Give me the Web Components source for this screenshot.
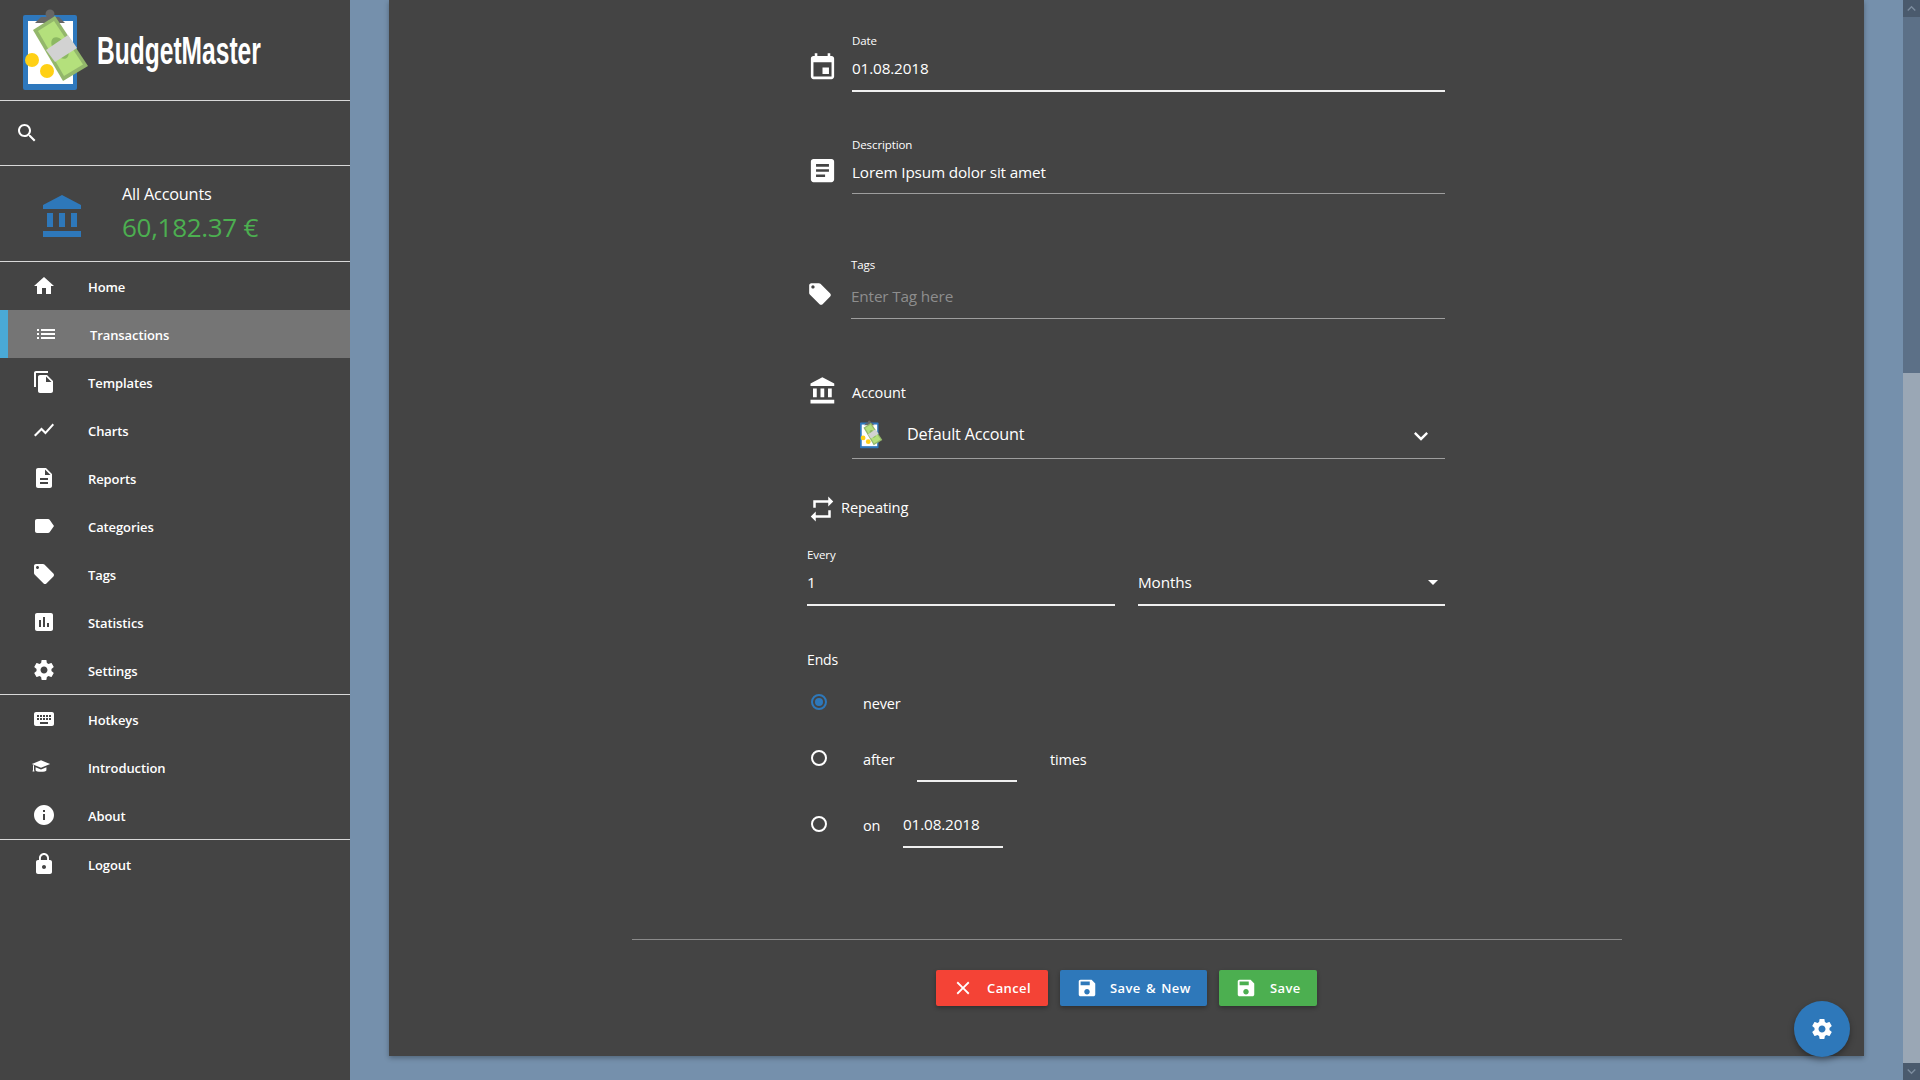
<!DOCTYPE html>
<html lang="en"><head><meta charset="utf-8"><title>BudgetMaster</title>
<style>
html,body{margin:0;padding:0;height:100%;overflow:hidden;background:#7590ac}
body{font-family:"Open Sans","Noto Sans","Liberation Sans",sans-serif;color:#fff}
</style></head><body>
<bm-app>
  <bm-sidebar slot="side">
    <bm-nav icon="home">Home</bm-nav>
    <bm-nav icon="list" active>Transactions</bm-nav>
    <bm-nav icon="copy">Templates</bm-nav>
    <bm-nav icon="chart">Charts</bm-nav>
    <bm-nav icon="doc">Reports</bm-nav>
    <bm-nav icon="label">Categories</bm-nav>
    <bm-nav icon="tag">Tags</bm-nav>
    <bm-nav icon="stats">Statistics</bm-nav>
    <bm-nav icon="gear">Settings</bm-nav>
    <bm-rule></bm-rule>
    <bm-nav icon="keyboard">Hotkeys</bm-nav>
    <bm-nav icon="cap">Introduction</bm-nav>
    <bm-nav icon="info">About</bm-nav>
    <bm-rule></bm-rule>
    <bm-nav icon="lock">Logout</bm-nav>
  </bm-sidebar>
  <bm-card slot="main">
    <bm-form>
      <bm-field icon="event" label="Date" line="strong" style="--pt:0px;--lh:38px;--pb:3px;--it:19px;--is:31px;margin-top:33px">01.08.2018</bm-field>
      <bm-field icon="article" label="Description" style="--pt:0px;--lh:38px;--pb:2px;--it:18px;--is:31px;margin-top:45px">Lorem Ipsum dolor sit amet</bm-field>
      <bm-field icon="tag" label="Tags" placeholder style="--pt:2px;--lh:42px;--pb:1px;--it:24px;--is:26px;--col:44px;margin-top:63px">Enter Tag here</bm-field>
      <bm-account style="margin-top:57px">Default Account</bm-account>
      <bm-heading style="margin-top:35px">Repeating</bm-heading>
      <bm-repeat style="margin-top:23px"></bm-repeat>
      <bm-ends style="margin-top:44px"></bm-ends>
    </bm-form>
    <bm-rule style="margin:91px 242px 0 243px;background:#8a8a8a"></bm-rule>
    <bm-actions style="margin-top:30px">
      <bm-button icon="close" color="#f44336" style="width:112px;--gap:13px">Cancel</bm-button>
      <bm-button icon="save" color="#2e78ba" style="width:147px;--gap:12px">Save &amp; New</bm-button>
      <bm-button icon="save" color="#4caf50" style="width:98px;--gap:13px">Save</bm-button>
    </bm-actions>
  </bm-card>
  <bm-scrollbar slot="bar"></bm-scrollbar>
  <bm-fab slot="fab"></bm-fab>
</bm-app>
<script>
const P={
home:'M10 20v-6h4v6h5v-8h3L12 3 2 12h3v8z',
list:'M3 13h2v-2H3v2zm0 4h2v-2H3v2zm0-8h2V7H3v2zm4 4h14v-2H7v2zm0 4h14v-2H7v2zM7 7v2h14V7H7z',
copy:'M16 1H4c-1.1 0-2 .9-2 2v14h2V3h12V1zm-1 4l6 6v10c0 1.1-.9 2-2 2H7.99C6.89 23 6 22.1 6 21l.01-14c0-1.1.89-2 1.99-2h7zm-1 7h5.5L14 6.5V12z',
chart:'M3.5 18.49l6-6.01 4 4L22 6.92l-1.41-1.41-7.09 7.97-4-4L2 16.99z',
doc:'M14 2H6c-1.1 0-1.99.9-1.99 2L4 20c0 1.1.89 2 1.99 2H18c1.1 0 2-.9 2-2V8l-6-6zm2 16H8v-2h8v2zm0-4H8v-2h8v2zm-3-5V3.5L18.5 9H13z',
label:'M17.63 5.84C17.27 5.33 16.67 5 16 5L5 5.01C3.9 5.01 3 5.9 3 7v10c0 1.1.9 1.99 2 1.99L16 19c.67 0 1.27-.33 1.63-.84L22 12l-4.37-6.16z',
tag:'M21.41 11.58l-9-9C12.05 2.22 11.55 2 11 2H4c-1.1 0-2 .9-2 2v7c0 .55.22 1.05.59 1.42l9 9c.36.36.86.58 1.41.58.55 0 1.05-.22 1.41-.59l7-7c.37-.36.59-.86.59-1.41 0-.55-.23-1.06-.59-1.42zM5.5 7C4.67 7 4 6.33 4 5.5S4.67 4 5.5 4 7 4.67 7 5.5 6.33 7 5.5 7z',
stats:'M19 3H5c-1.1 0-2 .9-2 2v14c0 1.1.9 2 2 2h14c1.1 0 2-.9 2-2V5c0-1.1-.9-2-2-2zM9 17H7v-7h2v7zm4 0h-2V7h2v10zm4 0h-2v-4h2v4z',
gear:'M19.43 12.98c.04-.32.07-.64.07-.98s-.03-.66-.07-.98l2.11-1.65c.19-.15.24-.42.12-.64l-2-3.46c-.12-.22-.39-.3-.61-.22l-2.49 1c-.52-.4-1.08-.73-1.69-.98l-.38-2.65C14.46 2.18 14.25 2 14 2h-4c-.25 0-.46.18-.49.42l-.38 2.65c-.61.25-1.17.59-1.69.98l-2.49-1c-.23-.09-.49 0-.61.22l-2 3.46c-.13.22-.07.49.12.64l2.11 1.65c-.04.32-.07.65-.07.98s.03.66.07.98l-2.11 1.65c-.19.15-.24.42-.12.64l2 3.46c.12.22.39.3.61.22l2.49-1c.52.4 1.08.73 1.69.98l.38 2.65c.03.24.24.42.49.42h4c.25 0 .46-.18.49-.42l.38-2.65c.61-.25 1.17-.59 1.69-.98l2.49 1c.23.09.49 0 .61-.22l2-3.46c.12-.22.07-.49-.12-.64l-2.11-1.65zM12 15.5c-1.93 0-3.5-1.57-3.5-3.5s1.57-3.5 3.5-3.5 3.5 1.57 3.5 3.5-1.57 3.5-3.5 3.5z',
keyboard:'M20 5H4c-1.1 0-1.99.9-1.99 2L2 17c0 1.1.9 2 2 2h16c1.1 0 2-.9 2-2V7c0-1.1-.9-2-2-2zm-9 3h2v2h-2V8zm0 3h2v2h-2v-2zM8 8h2v2H8V8zm0 3h2v2H8v-2zm-1 2H5v-2h2v2zm0-3H5V8h2v2zm9 7H8v-2h8v2zm0-4h-2v-2h2v2zm0-3h-2V8h2v2zm3 3h-2v-2h2v2zm0-3h-2V8h2v2z',
cap:'M1 8.500L12 4l11 4.500L12 13zM5.500 12.200l6.500 2.700 6.500-2.700V16c0 2.400-13 2.400-13 0zM2.400 9.900h1.200v5.400l.6 2H1.800l.6-2z',
info:'M12 2C6.48 2 2 6.48 2 12s4.48 10 10 10 10-4.48 10-10S17.52 2 12 2zm1 15h-2v-6h2v6zm0-8h-2V7h2v2z',
lock:'M18 8h-1V6c0-2.76-2.24-5-5-5S7 3.24 7 6v2H6c-1.1 0-2 .9-2 2v10c0 1.1.9 2 2 2h12c1.1 0 2-.9 2-2V10c0-1.1-.9-2-2-2zm-6 9c-1.1 0-2-.9-2-2s.9-2 2-2 2 .9 2 2-.9 2-2 2zm3.1-9H8.9V6c0-1.71 1.39-3.1 3.1-3.1 1.71 0 3.1 1.39 3.1 3.1v2z',
search:'M15.5 14h-.79l-.28-.27C15.41 12.59 16 11.11 16 9.5 16 5.91 13.09 3 9.5 3S3 5.91 3 9.5 5.91 16 9.5 16c1.61 0 3.09-.59 4.23-1.57l.27.28v.79l5 4.99L20.49 19l-4.99-5zm-6 0C7.01 14 5 11.99 5 9.5S7.01 5 9.5 5 14 7.01 14 9.5 11.99 14 9.5 14z',
bank:'M4 10v7h3v-7H4zm6 0v7h3v-7h-3zM2 22h19v-3H2v3zm14-12v7h3v-7h-3zm-4.5-9L2 6v2h19V6l-9.5-5z',
event:'M17 12h-5v5h5v-5zM16 1v2H8V1H6v2H5c-1.11 0-1.99.9-1.99 2L3 19c0 1.1.89 2 2 2h14c1.1 0 2-.9 2-2V5c0-1.1-.9-2-2-2h-1V1h-2zm3 18H5V8h14v11z',
article:'M19 3H5c-1.1 0-2 .9-2 2v14c0 1.1.9 2 2 2h14c1.1 0 2-.9 2-2V5c0-1.1-.9-2-2-2zm-5 14H7v-2h7v2zm3-4H7v-2h10v2zm0-4H7V7h10v2z',
repeat:'M7 7h10v3l4-4-4-4v3H5v6h2V7zm10 10H7v-3l-4 4 4 4v-3h12v-6h-2v4z',
save:'M17 3H5c-1.11 0-2 .9-2 2v14c0 1.1.89 2 2 2h14c1.1 0 2-.9 2-2V7l-4-4zm-5 16c-1.66 0-3-1.34-3-3s1.34-3 3-3 3 1.34 3 3-1.34 3-3 3zm3-10H5V5h10v4z',
close:'M19 6.41L17.59 5 12 10.59 6.41 5 5 6.41 10.59 12 5 17.59 6.41 19 12 13.41 17.59 19 19 17.59 13.41 12z',
chevron:'M7.41 8.59L12 13.17l4.59-4.58L18 10l-6 6-6-6z',
chevup:'M7.41 15.41L12 10.83l4.59 4.58L18 14l-6-6-6 6z'
};
function def(name,html,extra){
  customElements.define(name,class extends HTMLElement{
    constructor(){super();this.attachShadow({mode:'open'}).innerHTML=typeof html==='function'?html(this):html;}
    connectedCallback(){ if(extra) extra(this); }
  });
}
def('bm-icon','',el=>{
  const n=el.getAttribute('name'),c=el.getAttribute('color')||'currentColor';
  el.shadowRoot.innerHTML=`<style>:host{display:block;width:var(--s,24px);height:var(--s,24px);flex:none}svg{display:block;width:100%;height:100%}</style>
  <svg viewBox="0 0 24 24" fill="${c}"><path d="${P[n]}"/></svg>`;
});
const LOGO=`<rect x="23" y="15" width="54" height="75" rx="2" fill="#2e78bd"/><rect x="28" y="21" width="45" height="63" fill="#fff"/>
<path d="M35 23l6-6h18l6 6z" fill="#666"/><circle cx="50" cy="14" r="4.500" fill="#666"/>
<path d="M33 30L55 16 88 66 63 81z" fill="#93b76b"/><path d="M38 31L54 21 83 64.500 64 76z" fill="#b4e07c"/>
<ellipse cx="60" cy="48" rx="7" ry="12" transform="rotate(-32 60 48)" fill="#8cb862"/>
<path d="M46 50L68 35 77 48 55 62z" fill="#d2d2d2"/>
<circle cx="32" cy="60" r="7" fill="#ffd015"/><circle cx="47" cy="71" r="7" fill="#ffd015"/>`;
def('bm-logo',`<style>:host{display:block}svg{display:block;width:100%;height:100%}</style><svg viewBox="20 8 70 84">${LOGO}</svg>`);
def('bm-rule',`<style>:host{display:block;height:1px;background:#d8d8d8}</style>`);
def('bm-app',`<style>:host{display:flex;height:100vh;overflow:hidden;background:#7590ac;position:relative}
.main{flex:1;min-width:0;padding:0 56px 0 39px;overflow:hidden}</style>
<slot name="side"></slot><div class="main"><slot name="main"></slot></div><slot name="bar"></slot><slot name="fab"></slot>`);
def('bm-sidebar',`<style>:host{display:block;width:350px;flex:none;background:#444;height:100%;color:#fff}
.brand{height:100px;display:flex;align-items:flex-start;padding-left:20px;box-sizing:border-box}
bm-logo{width:70px;height:84px;margin-top:8px;flex:none}
.name{font:700 39px/1 "Liberation Sans Narrow","Liberation Sans",sans-serif;display:block;margin:31px 0 0 7px;transform-origin:0 50%;white-space:nowrap;transform:scaleX(.63);letter-spacing:0}
.search{height:64px;display:flex;align-items:center;padding-left:15px;box-sizing:border-box}
.acct{height:95px;display:flex;box-sizing:border-box;padding-left:39px}
.acct bm-icon{--s:48px;margin-top:27px;color:#2e78ba}
.t{margin-left:35px;padding-top:17px}
.a{font-size:16.300px;line-height:22px;letter-spacing:-.2px}
.b{font-size:26px;line-height:34px;color:#4caf50;margin-top:5px;letter-spacing:-.3px}
</style>
<div class="brand"><bm-logo></bm-logo><span class="name">BudgetMaster</span></div><bm-rule></bm-rule>
<div class="search"><bm-icon name="search"></bm-icon></div><bm-rule></bm-rule>
<div class="acct"><bm-icon name="bank"></bm-icon><div class="t"><div class="a">All Accounts</div><div class="b">60,182.37 €</div></div></div><bm-rule></bm-rule>
<slot></slot>`);
def('bm-nav',el=>`<style>:host{display:flex;height:48px;align-items:center;box-sizing:border-box;padding-left:32px;padding-top:2px;font-size:13px;font-weight:600;letter-spacing:-.1px;color:#fff}
:host([active]){background:#757575;border-left:8px solid #4aa9d6;padding-left:26px}
.i{margin-right:32px;margin-top:-2px}
:host([icon=cap]) .i{--s:20px;margin-left:-1px;margin-right:37px}
.lbl{white-space:nowrap}
</style><bm-icon class="i" name="${el.getAttribute('icon')}"></bm-icon><span class="lbl"><slot></slot></span>`);
def('bm-card',`<style>:host{display:block;height:1056px;background:#444;box-sizing:border-box;box-shadow:0 2px 5px rgba(0,0,0,.3);color:#fff;overflow:hidden}</style><slot></slot>`);
def('bm-form',`<style>:host{display:block;width:638px;margin-left:418px}</style><slot></slot>`);
def('bm-field',el=>`<style>:host{display:grid;grid-template-columns:var(--col,45px) 1fr}
bm-icon{--s:var(--is,30px);margin-top:var(--it,0)}
.l{font-size:11.500px;line-height:16px;height:16px;letter-spacing:-.1px}
.v{font-size:15.300px;padding:var(--pt,0) 0 var(--pb,0);line-height:var(--lh,38px);border-bottom:${el.getAttribute('line')==='strong'?'2px solid #f0f0f0':'1px solid #9e9e9e'};color:${el.hasAttribute('placeholder')?'#8e8e8e':'#fff'};letter-spacing:-.15px}
</style><bm-icon name="${el.getAttribute('icon')}"></bm-icon><div><div class="l">${el.getAttribute('label')}</div><div class="v"><slot></slot></div></div>`);
def('bm-account',`<style>:host{display:block}
.top{display:grid;grid-template-columns:45px 1fr;height:34px}
.top bm-icon{--s:30px;margin-left:1px}
.l{font-size:14.500px;line-height:20px;padding-top:7px;letter-spacing:-.15px}
.sel{margin-left:45px;height:48px;border-bottom:1px solid #9e9e9e;display:flex;align-items:center;padding-left:7px;padding-right:10px;font-size:16.200px;letter-spacing:-.2px}
bm-logo{width:24px;height:29px;flex:none;margin-right:24px}
.c{--s:28px;margin-left:auto;margin-top:4px}
</style><div class="top"><bm-icon name="bank"></bm-icon><div class="l">Account</div></div>
<div class="sel"><bm-logo></bm-logo><span><slot></slot></span><bm-icon class="c" name="chevron"></bm-icon></div>`);
def('bm-heading',`<style>:host{display:flex;align-items:center;height:30px;font-size:14.700px;letter-spacing:-.15px}bm-icon{--s:30px;margin-right:4px}span{margin-top:-4px}</style><bm-icon name="repeat"></bm-icon><span><slot></slot></span>`);
def('bm-repeat',`<style>:host{display:grid;grid-template-columns:308px 307px;column-gap:23px}
.l{font-size:11.500px;line-height:16px;height:16px;letter-spacing:-.1px}
.v{font-size:15.300px;line-height:38px;padding-bottom:3px;border-bottom:2px solid #f0f0f0;position:relative;display:flex;justify-content:space-between;align-items:center;letter-spacing:-.15px}
.tri{width:0;height:0;border:5px solid transparent;border-top:5px solid #fff;border-bottom:0;margin-right:7px}
</style><div><div class="l">Every</div><div class="v">1</div></div><div><div class="l"></div><div class="v"><span>Months</span><span class="tri"></span></div></div>`);
def('bm-radio',el=>`<style>:host{display:flex;align-items:flex-start;height:var(--h,24px);font-size:14.500px;line-height:24px;letter-spacing:-.15px;padding-left:4px}
.r{width:16px;height:16px;box-sizing:border-box;border:2px solid ${el.hasAttribute('checked')?'#2e78ba':'#fff'};border-radius:50%;margin-top:2px;margin-right:36px;flex:none;position:relative}
.r i{position:absolute;inset:2px;border-radius:50%;background:${el.hasAttribute('checked')?'#2e78ba':'transparent'}}
</style><span class="r"><i></i></span><slot></slot>`);
def('bm-input',`<style>:host{display:block;height:34px;box-sizing:border-box;width:100px;border-bottom:2px solid #f0f0f0;font-size:15.300px;line-height:20px;letter-spacing:-.15px}</style><slot></slot>`);
def('bm-ends',`<style>:host{display:block;font-size:14px;letter-spacing:-.15px}
.h{line-height:20px}
.after{width:54px}.on{width:40px}.times{margin-left:33px}
</style><div class="h">Ends</div>
<bm-radio checked style="margin-top:22px">never</bm-radio>
<bm-radio style="margin-top:32px;--h:34px"><span class="after">after</span><bm-input></bm-input><span class="times">times</span></bm-radio>
<bm-radio style="margin-top:32px;--h:34px"><span class="on">on</span><bm-input>01.08.2018</bm-input></bm-radio>`);
def('bm-actions',`<style>:host{display:flex;justify-content:center;gap:12px}</style><slot></slot>`);
def('bm-button',el=>`<style>:host{display:flex;align-items:center;height:36px;box-sizing:border-box;padding-left:16px;background:${el.getAttribute('color')};border-radius:2px;box-shadow:0 2px 4px rgba(0,0,0,.3);font-size:13px;font-weight:600;letter-spacing:.4px;word-spacing:1.500px;white-space:nowrap}
bm-icon{--s:22px;margin-right:var(--gap,12px)}</style><bm-icon name="${el.getAttribute('icon')}"></bm-icon><slot></slot>`);
def('bm-scrollbar',`<style>:host{display:flex;flex-direction:column;width:17px;height:100%;flex:none;position:absolute;right:0;top:0;background:#5c7087}
.b{height:17px;flex:none;background:#4a5a6d;color:#7c8c9e;display:flex;align-items:center;justify-content:center}
bm-icon{--s:17px}
.track{height:356px;flex:none}.thumb{flex:1;background:#9aa7b5}</style>
<div class="b"><bm-icon name="chevup"></bm-icon></div><div class="track"></div><div class="thumb"></div><div class="b"><bm-icon name="chevron"></bm-icon></div>`);
def('bm-fab',`<style>:host{position:absolute;left:1794px;top:1001px;width:56px;height:56px;border-radius:50%;background:#2e78ba;display:flex;align-items:center;justify-content:center;box-shadow:0 3px 6px rgba(0,0,0,.35);color:#fff}bm-icon{--s:24px}</style><bm-icon name="gear"></bm-icon>`);
</script>
</body></html>
